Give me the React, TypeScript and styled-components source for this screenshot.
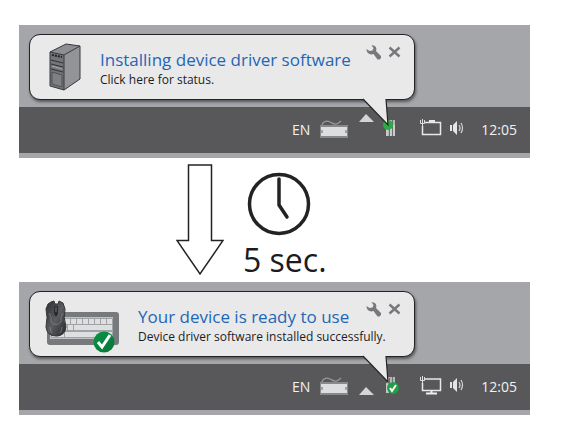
import React from "react";
import styled, { createGlobalStyle } from "styled-components";

const GlobalStyle = createGlobalStyle`
  * { box-sizing: border-box; }
  body {
    margin: 0;
    background: #fff;
    font-family: "Open Sans", "Noto Sans", sans-serif;
  }
`;

const Page = styled.main`
  padding: 25px 31px 22px 19px;
`;

const Screen = styled.section`
  background: #a5a6a9;
  padding-bottom: 5px;
`;

const Desktop = styled.div`
  padding: 9px 115px 7px 10px;
`;

const Balloon = styled.div<{ $gap: number; $inset: number }>`
  position: relative;
  display: flex;
  align-items: flex-start;
  gap: ${(p) => p.$gap}px;
  height: 66px;
  padding: 8px 13px 0 ${(p) => p.$inset}px;
  background: #e9e9ea;
  border: 1px solid #232325;
  border-radius: 11px;
  box-shadow: 1px 2px 3px #55565a;
`;

const Tail = styled.svg`
  position: absolute;
  right: 23px;
  top: 63px;
`;

const Message = styled.div`
  flex: 1;
  min-width: 0;
  white-space: nowrap;
`;

const Heading = styled.div`
  display: flex;
  align-items: flex-start;
  justify-content: space-between;
`;

const Title = styled.h2`
  margin: 5px 0 0;
  font-size: 17px;
  line-height: 24px;
  font-weight: 400;
  color: #1f66b5;
`;

const Detail = styled.p`
  margin: 0;
  font-size: 12px;
  line-height: 16px;
  color: #1c1c1e;
`;

const Actions = styled.div`
  display: flex;
  gap: 6px;
`;

const IconButton = styled.button`
  display: flex;
  padding: 0;
  border: 0;
  background: none;
  cursor: pointer;
`;

const Taskbar = styled.footer`
  display: flex;
  justify-content: flex-end;
  align-items: center;
  height: 46px;
  padding-right: 13px;
  background: #58585a;
  color: #f2f2f2;
`;

const Language = styled.button`
  padding: 0;
  margin-right: 9px;
  border: 0;
  background: none;
  color: inherit;
  font: inherit;
  font-size: 14px;
  line-height: 20px;
`;

const Tray = styled.div`
  display: flex;
  align-items: center;
  height: 32px;
  padding-bottom: 4px;
  margin-right: 17px;
`;

const Expander = styled.button<{ $raised: boolean }>`
  display: flex;
  align-self: ${(p) => (p.$raised ? "flex-start" : "center")};
  margin: 0 9px 0 10px;
  padding: ${(p) => (p.$raised ? 0 : 12)}px 0 0;
  border: 0;
  background: none;
`;

const Network = styled.span`
  display: flex;
  margin: 0 7px 0 20px;
`;

const Clock = styled.time`
  font-size: 14px;
  line-height: 20px;
`;

const Delay = styled.section`
  display: flex;
  align-items: flex-start;
  gap: 19px;
  height: 124px;
  padding: 6px 0 0 157px;
`;

const Wait = styled.div`
  display: flex;
  flex-direction: column;
  align-items: flex-start;
`;

const ClockFace = styled.svg`
  margin-left: 4px;
`;

const WaitText = styled.p`
  margin: 0;
  font-size: 32px;
  line-height: 40px;
  color: #1c1c1e;
`;

const WrenchIcon = () => (
  <svg width="16" height="18" viewBox="0 0 16 18" aria-hidden="true">
    <path d="M5.500 2.200 C9 1.800 11.500 5 10 8 L15 13 V15 L13.500 16.500 H11.500 L7.500 11 C4 12.500 0.500 10 0.500 6 L3.500 8 L6.500 7.500 L7.500 5 Z" fill="#77787b" />
  </svg>
);

const CloseIcon = () => (
  <svg width="13" height="18" viewBox="0 0 13 18" aria-hidden="true">
    <path d="M1.500 4.500 L11.500 13.500 M11.500 4.500 L1.500 13.500" stroke="#77787b" strokeWidth="2.400" />
  </svg>
);

const TowerIcon = () => (
  <svg width="32" height="48" viewBox="0 0 32 48" role="img" aria-label="Computer">
    <path d="M1 9 L17 1 L31 3 L15 12 Z" fill="#8c8e91" />
    <path d="M1 9 L15 12 V47 L1 43 Z" fill="#737578" />
    <path d="M15 12 L31 3 V36 L15 47 Z" fill="#929497" />
    <path d="M1 9 L17 1 L31 3 V36 L15 47 L1 43 Z M1 9 L15 12 L31 3 M15 12 V47" fill="none" stroke="#37383a" strokeLinejoin="round" />
    <path d="M2 17 L14 20 M2 21 L14 24 M2 26 L14 29" stroke="#303133" />
    <path d="M3 29 L13 32 V44 L3 41 Z" fill="#7e8083" stroke="#505154" />
    <path d="M3 12 L13 14" stroke="#222" strokeWidth="2" strokeDasharray="2 1" />
    <path d="M3 23 L13 26" stroke="#a7a9ac" />
  </svg>
);

const InputDevicesIcon = () => (
  <svg width="75" height="54" viewBox="0 0 75 54" role="img" aria-label="Mouse and keyboard">
    <defs>
      <linearGradient id="mouse" x1="0" y1="0" x2="1" y2="1">
        <stop offset="0" stopColor="#2d2d2f" />
        <stop offset="0.5" stopColor="#5c5d60" />
        <stop offset="1" stopColor="#262628" />
      </linearGradient>
      <linearGradient id="tick" x1="0" y1="0" x2="1" y2="1">
        <stop offset="0" stopColor="#079447" />
        <stop offset="1" stopColor="#087537" />
      </linearGradient>
    </defs>
    <rect x="2" y="12" width="72" height="33" rx="3" fill="#77797c" />
    <rect x="5" y="17" width="63" height="22" fill="#bfc0c2" />
    <g fill="#dedfe0" stroke="#a0a2a5">
      <path d="M18.500 18.500 H67.500 V24.500 H18.500 Z M25.500 18 V24 M31.500 18 V24 M37.500 18 V24 M43.500 18 V24 M49.500 18 V24 M55.500 18 V24 M61.500 18 V24" />
      <path d="M15.500 24.500 H67.500 V30.500 H15.500 Z M22.500 24 V30 M28.500 24 V30" />
      <path d="M6.500 31.500 H67.500 V37.500 H6.500 Z M12.500 31 V37 M19.500 31 V37" />
    </g>
    <path d="M6 2 L9 1 L10 4 H13 L14 1 L18 3 L20 9 Q18 17 21 27 Q20 36 11 36 Q2 36 1 27 Q3 17 1 9 L3 4 Z" fill="url(#mouse)" stroke="#333436" />
    <path d="M4 13 Q7 17 6 22 Q11 27 16 22 Q15 17 18 13 M5 27 Q5 31 7 33 M17 27 Q17 31 15 33" fill="none" stroke="#85868a" strokeWidth="0.700" />
    <path d="M9 6 H13 V14 L11 17 L9 14 Z" fill="#2b2b2d" />
    <path d="M11 7 V12" stroke="#737578" strokeWidth="1" />
    <circle cx="59" cy="42" r="10.500" fill="url(#tick)" />
    <path d="M53 42 L57 47 L65 35" fill="none" stroke="#fff" strokeWidth="3" />
  </svg>
);

const KeyboardIcon = () => (
  <svg width="30" height="22" viewBox="0 0 30 22" aria-hidden="true">
    <path d="M3 9 C3 5 7 3 11 5 S17 9 22 4" fill="none" stroke="#97989b" strokeWidth="1.200" />
    <rect x="1" y="8" width="28" height="13" fill="#88898c" />
    <rect x="2" y="10" width="26" height="9" fill="#dddede" />
    <path d="M3 13 V16 M27 13 V16" stroke="#66676a" />
  </svg>
);

const DriverIcon = ({ ready }: { ready: boolean }) => (
  <svg width="16" height="22" viewBox="0 0 16 22" aria-hidden="true">
    <path d="M4 3 H12 V19 H3 V9 H4 Z" fill="#b5b6b8" />
    <path d="M6.500 4 V19 M9.500 3 V19" stroke="#707174" />
    <path d="M4 10 V19 M8 8 V19 M11 8 V19" stroke="#dedede" />
    {ready ? (
      <>
        <circle cx="10" cy="14" r="6" fill="#239d48" />
        <path d="M7 14 L9 17 L13 11" fill="none" stroke="#fff" strokeWidth="2" />
      </>
    ) : (
      <circle cx="5" cy="8" r="5" fill="#2daa45" />
    )}
  </svg>
);

const NetworkIcon = ({ ready }: { ready: boolean }) => (
  <svg width="23" height="22" viewBox="0 0 23 22" aria-hidden="true">
    <path d="M1.500 3 V6.500 H5.500 V3 M3.500 2 V9" fill="none" stroke="#dedede" />
    {ready ? (
      <>
        <path d="M6 5 H21.500 V16.500 H3.500 V9" fill="none" stroke="#e8e8e8" strokeWidth="1.500" />
        <path d="M12.500 17 V19 M7 19.500 H18" stroke="#eee" strokeWidth="2" />
      </>
    ) : (
      <>
        <path d="M3.500 9 V17.500 H21.500 V5.500 H6" fill="none" stroke="#e8e8e8" strokeWidth="1.500" />
        <path d="M10 4 H16" stroke="#e8e8e8" strokeWidth="2" />
      </>
    )}
  </svg>
);

const SpeakerIcon = () => (
  <svg width="15" height="16" viewBox="0 0 15 16" aria-hidden="true">
    <path d="M1 5 H3 V11 H1 Z M4 5 L8 1 V15 L4 11 Z" fill="#e5e5e5" />
    <path d="M10 5 Q12 8 10 11 M12 3 Q15 8 12 13" fill="none" stroke="#d6d6d6" strokeWidth="1.200" />
  </svg>
);

type NoticeProps = {
  icon: React.ReactNode;
  inset: number;
  gap: number;
  title: string;
  detail: string;
  ready?: boolean;
};

const Notice = ({ icon, inset, gap, title, detail, ready = false }: NoticeProps) => (
  <Screen>
    <Desktop>
      <Balloon $inset={inset} $gap={gap} role="status">
        {icon}
        <Message>
          <Heading>
            <Title>{title}</Title>
            <Actions>
              <IconButton aria-label="Options"><WrenchIcon /></IconButton>
              <IconButton aria-label="Close"><CloseIcon /></IconButton>
            </Actions>
          </Heading>
          <Detail>{detail}</Detail>
        </Message>
        <Tail width="30" height="30" viewBox="0 0 30 30" aria-hidden="true">
          <path d="M1 0 L27 27 L25 0 Z" fill="#e9e9ea" />
          <path d="M2 1 L27 27 L25 1" fill="none" stroke="#232325" strokeWidth="1.200" />
        </Tail>
      </Balloon>
    </Desktop>
    <Taskbar>
      <Language>EN</Language>
      <Tray>
        <KeyboardIcon />
        <Expander $raised={!ready} aria-label="Show hidden icons">
          <svg width="15" height="8" viewBox="0 0 15 8" aria-hidden="true">
            <path d="M0 8 L7 0 L15 8 Z" fill="#d4d4d5" />
          </svg>
        </Expander>
        <DriverIcon ready={ready} />
        <Network><NetworkIcon ready={ready} /></Network>
        <SpeakerIcon />
      </Tray>
      <Clock>12:05</Clock>
    </Taskbar>
  </Screen>
);

export default function App() {
  return (
    <>
      <GlobalStyle />
      <Page>
        <Notice
          icon={<TowerIcon />}
          inset={19}
          gap={19}
          title="Installing device driver software"
          detail="Click here for status."
        />
        <Delay>
          <svg width="48" height="112" viewBox="0 0 48 112" aria-hidden="true">
            <path d="M12.500 1 H35.500 V76.500 H47 L24 110 L1 76.500 H12.500 Z" fill="#fff" stroke="#232325" strokeWidth="1.500" />
          </svg>
          <Wait>
            <ClockFace width="64" height="76" viewBox="0 0 64 76" role="img" aria-label="Clock">
              <circle cx="32" cy="40" r="29.500" fill="none" stroke="#232325" strokeWidth="3.500" />
              <path d="M32 15 V41 L40 53" fill="none" stroke="#232325" strokeWidth="3.500" strokeLinecap="round" strokeLinejoin="round" />
            </ClockFace>
            <WaitText>5 sec.</WaitText>
          </Wait>
        </Delay>
        <Notice
          icon={<InputDevicesIcon />}
          inset={15}
          gap={18}
          title="Your device is ready to use"
          detail="Device driver software installed successfully."
          ready
        />
      </Page>
    </>
  );
}
